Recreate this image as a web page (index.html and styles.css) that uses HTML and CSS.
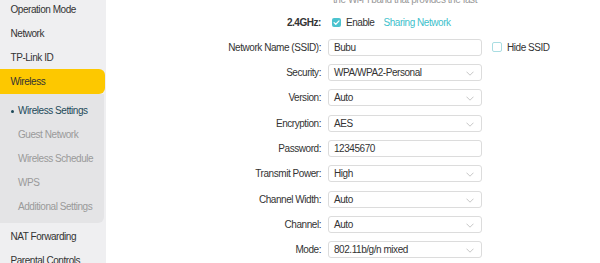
FILE: index.html
```html
<!DOCTYPE html>
<html lang="en">
<head>
  <meta charset="UTF-8">
  <title>Wireless Settings</title>
  <link rel="stylesheet" href="styles.css">
</head>
<body>
  <div class="page">
    <aside class="sidebar">
      <ul class="menu menu-top">
        <li class="menu-item">Operation Mode</li>
        <li class="menu-item">Network</li>
        <li class="menu-item">TP-Link ID</li>
        <li class="menu-item active">Wireless</li>
      </ul>
      <ul class="submenu">
        <li class="submenu-item current">Wireless Settings</li>
        <li class="submenu-item">Guest Network</li>
        <li class="submenu-item">Wireless Schedule</li>
        <li class="submenu-item">WPS</li>
        <li class="submenu-item">Additional Settings</li>
      </ul>
      <ul class="menu menu-bottom">
        <li class="menu-item">NAT Forwarding</li>
        <li class="menu-item">Parental Controls</li>
      </ul>
    </aside>

    <main class="content">
      <p class="band-note">the Wi-Fi band that provides the fast</p>

      <div class="form">
        <label class="form-label bold">2.4GHz:</label>
        <div class="form-value inline">
          <span class="checkbox checked">
            <svg viewBox="0 0 10 10" width="9" height="9"><path d="M2.3 5.1 L4.2 6.9 L7.8 3.2" fill="none" stroke="#fff" stroke-width="1.4" stroke-linecap="round" stroke-linejoin="round"/></svg>
          </span>
          <span class="check-text">Enable</span>
          <a class="link">Sharing Network</a>
        </div>
        <div></div>

        <label class="form-label">Network Name (SSID):</label>
        <div class="field">Bubu</div>
        <div class="extra inline">
          <span class="checkbox"></span>
          <span class="check-text">Hide SSID</span>
        </div>

        <label class="form-label">Security:</label>
        <div class="field select">WPA/WPA2-Personal
          <svg class="chevron" viewBox="0 0 8 5" width="8" height="5"><path d="M0.5 0.7 L4 4.2 L7.5 0.7" fill="none" stroke="#b8b8b8" stroke-width="0.8"/></svg>
        </div>
        <div></div>

        <label class="form-label">Version:</label>
        <div class="field select">Auto
          <svg class="chevron" viewBox="0 0 8 5" width="8" height="5"><path d="M0.5 0.7 L4 4.2 L7.5 0.7" fill="none" stroke="#b8b8b8" stroke-width="0.8"/></svg>
        </div>
        <div></div>

        <label class="form-label">Encryption:</label>
        <div class="field select">AES
          <svg class="chevron" viewBox="0 0 8 5" width="8" height="5"><path d="M0.5 0.7 L4 4.2 L7.5 0.7" fill="none" stroke="#b8b8b8" stroke-width="0.8"/></svg>
        </div>
        <div></div>

        <label class="form-label">Password:</label>
        <div class="field">12345670</div>
        <div></div>

        <label class="form-label">Transmit Power:</label>
        <div class="field select">High
          <svg class="chevron" viewBox="0 0 8 5" width="8" height="5"><path d="M0.5 0.7 L4 4.2 L7.5 0.7" fill="none" stroke="#b8b8b8" stroke-width="0.8"/></svg>
        </div>
        <div></div>

        <label class="form-label">Channel Width:</label>
        <div class="field select">Auto
          <svg class="chevron" viewBox="0 0 8 5" width="8" height="5"><path d="M0.5 0.7 L4 4.2 L7.5 0.7" fill="none" stroke="#b8b8b8" stroke-width="0.8"/></svg>
        </div>
        <div></div>

        <label class="form-label">Channel:</label>
        <div class="field select">Auto
          <svg class="chevron" viewBox="0 0 8 5" width="8" height="5"><path d="M0.5 0.7 L4 4.2 L7.5 0.7" fill="none" stroke="#b8b8b8" stroke-width="0.8"/></svg>
        </div>
        <div></div>

        <label class="form-label">Mode:</label>
        <div class="field select">802.11b/g/n mixed
          <svg class="chevron" viewBox="0 0 8 5" width="8" height="5"><path d="M0.5 0.7 L4 4.2 L7.5 0.7" fill="none" stroke="#b8b8b8" stroke-width="0.8"/></svg>
        </div>
        <div></div>
      </div>
    </main>
  </div>
</body>
</html>
```

FILE: styles.css
```css
* {
  margin: 0;
  padding: 0;
  box-sizing: border-box;
}

body {
  font-family: 'Liberation Sans', Arial, sans-serif;
  font-size: 10px;
  letter-spacing: -0.45px;
  color: #333;
  background: #fff;
  overflow: hidden;
  height: 263px;
}

.page {
  display: flex;
  height: 263px;
}

/* sidebar */

.sidebar {
  width: 106px;
  flex-shrink: 0;
  background-color: #efeff1;
}

.menu {
  list-style: none;
}

.menu-top {
  margin-top: -2px;
}

.menu-bottom {
  margin-top: 2px;
}

.menu-item {
  height: 24px;
  line-height: 24px;
  padding-left: 10.5px;
  color: #333;
  white-space: nowrap;
}

.menu-item.active {
  background-color: #fdc800;
  border-radius: 0 6px 6px 0;
  margin-right: 1px;
  height: 25px;
  line-height: 26px;
  margin-top: -1px;
}

.submenu {
  list-style: none;
  background-color: #e4e4e6;
  border-radius: 0 0 6px 0;
  margin-right: 2px;
  padding: 5px 0 4px;
}

.submenu-item {
  height: 24px;
  line-height: 24px;
  padding-left: 18px;
  color: #9a9a9a;
  white-space: nowrap;
  position: relative;
}

.submenu-item.current {
  color: #1d4a5a;
}

.submenu-item.current::before {
  content: '';
  position: absolute;
  left: 10.5px;
  top: 11px;
  width: 3px;
  height: 3px;
  border-radius: 50%;
  background-color: #1d4a5a;
}

/* content */

.content {
  flex: 1;
}

.band-note {
  margin: -6px 0 0 227px;
  line-height: 12px;
  color: #999;
  white-space: nowrap;
}

.form {
  display: grid;
  grid-template-columns: 215px 154px auto;
  grid-auto-rows: 17px;
  column-gap: 7px;
  row-gap: 8.3px;
  margin-top: 7.5px;
}

.form-label {
  text-align: right;
  line-height: 17px;
  color: #333;
  white-space: nowrap;
}

.form-label.bold {
  font-weight: bold;
}

.inline {
  display: flex;
  align-items: center;
  white-space: nowrap;
}

.form-value .checkbox {
  margin-left: 4px;
}

.field {
  border: 1px solid #dcdcdc;
  border-radius: 3px;
  line-height: 15px;
  padding-left: 5px;
  color: #333;
  white-space: nowrap;
  position: relative;
}

.select .chevron {
  position: absolute;
  right: 7px;
  top: 6px;
}

.extra {
  margin-left: 3px;
}

.checkbox {
  display: inline-flex;
  align-items: center;
  justify-content: center;
  width: 10px;
  height: 10px;
  border: 1px solid #a9dde2;
  border-radius: 2px;
  background-color: #fff;
}

.checkbox.checked {
  width: 9px;
  height: 9px;
  border: none;
  background-color: #4cc3cf;
}

.check-text {
  margin-left: 5px;
  color: #333;
}

.link {
  margin-left: 9px;
  color: #41bfcc;
  text-decoration: none;
}
```
